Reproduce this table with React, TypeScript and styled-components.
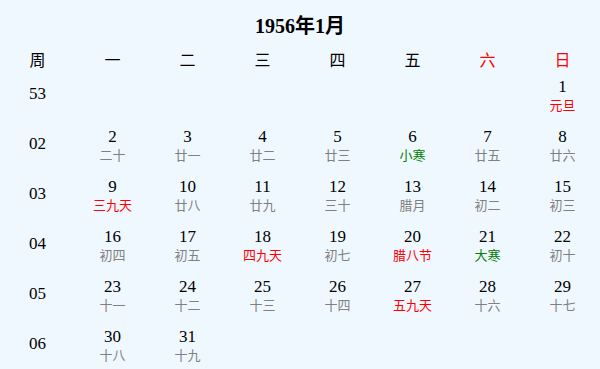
import React from "react";
import styled, { createGlobalStyle } from "styled-components";

type Day = { d: number; label: string; tone?: "red" | "green" };

const weeks: { no: string; days: (Day | null)[] }[] = [
  { no: "53", days: [null, null, null, null, null, null, { d: 1, label: "元旦", tone: "red" }] },
  {
    no: "02",
    days: [
      { d: 2, label: "二十" },
      { d: 3, label: "廿一" },
      { d: 4, label: "廿二" },
      { d: 5, label: "廿三" },
      { d: 6, label: "小寒", tone: "green" },
      { d: 7, label: "廿五" },
      { d: 8, label: "廿六" },
    ],
  },
  {
    no: "03",
    days: [
      { d: 9, label: "三九天", tone: "red" },
      { d: 10, label: "廿八" },
      { d: 11, label: "廿九" },
      { d: 12, label: "三十" },
      { d: 13, label: "腊月" },
      { d: 14, label: "初二" },
      { d: 15, label: "初三" },
    ],
  },
  {
    no: "04",
    days: [
      { d: 16, label: "初四" },
      { d: 17, label: "初五" },
      { d: 18, label: "四九天", tone: "red" },
      { d: 19, label: "初七" },
      { d: 20, label: "腊八节", tone: "red" },
      { d: 21, label: "大寒", tone: "green" },
      { d: 22, label: "初十" },
    ],
  },
  {
    no: "05",
    days: [
      { d: 23, label: "十一" },
      { d: 24, label: "十二" },
      { d: 25, label: "十三" },
      { d: 26, label: "十四" },
      { d: 27, label: "五九天", tone: "red" },
      { d: 28, label: "十六" },
      { d: 29, label: "十七" },
    ],
  },
  {
    no: "06",
    days: [{ d: 30, label: "十八" }, { d: 31, label: "十九" }, null, null, null, null, null],
  },
];

const heads = ["周", "一", "二", "三", "四", "五", "六", "日"];

export default function App() {
  return (
    <>
      <Global />
      <Page>
        <Title>1956年1月</Title>
        <Grid>
          {heads.map((h, i) => (
            <Head key={h} $weekend={i >= 6}>
              {h}
            </Head>
          ))}
          {weeks.map((w) => (
            <React.Fragment key={w.no}>
              <WeekNo>{w.no}</WeekNo>
              {w.days.map((day, i) => (
                <Cell key={i}>
                  {day && (
                    <>
                      <Num>{day.d}</Num>
                      <Lunar $tone={day.tone}>{day.label}</Lunar>
                    </>
                  )}
                </Cell>
              ))}
            </React.Fragment>
          ))}
        </Grid>
      </Page>
    </>
  );
}

const Global = createGlobalStyle`
  html, body {
    margin: 0;
    padding: 0;
    background: #f0f8ff;
  }
  body {
    font-family: "Liberation Serif", "Noto Sans CJK SC", serif;
    color: #000;
  }
`;

const Page = styled.div`
  width: 600px;
  height: 369px;
  overflow: hidden;
  background: #f0f8ff;
`;

const Title = styled.div`
  height: 48px;
  display: flex;
  align-items: center;
  justify-content: center;
  font-size: 20px;
  font-weight: bold;
`;

const Grid = styled.div`
  display: grid;
  grid-template-columns: repeat(8, 75px);
  grid-template-rows: 21px repeat(6, 50px);
`;

const Head = styled.div<{ $weekend: boolean }>`
  display: flex;
  align-items: center;
  justify-content: center;
  font-size: 16px;
  color: ${(p) => (p.$weekend ? "#ff0000" : "#000")};
`;

const WeekNo = styled.div`
  display: flex;
  align-items: center;
  justify-content: center;
  font-size: 17px;
`;

const Cell = styled.div`
  display: flex;
  flex-direction: column;
  align-items: center;
  justify-content: center;
  padding-top: 3px;
`;

const Num = styled.div`
  font-size: 17px;
  line-height: 18px;
`;

const Lunar = styled.div<{ $tone?: "red" | "green" }>`
  font-family: "Noto Sans CJK SC", sans-serif;
  font-size: 13px;
  line-height: 18px;
  color: ${(p) => (p.$tone === "red" ? "#ff0000" : p.$tone === "green" ? "#008000" : "#808080")};
`;
